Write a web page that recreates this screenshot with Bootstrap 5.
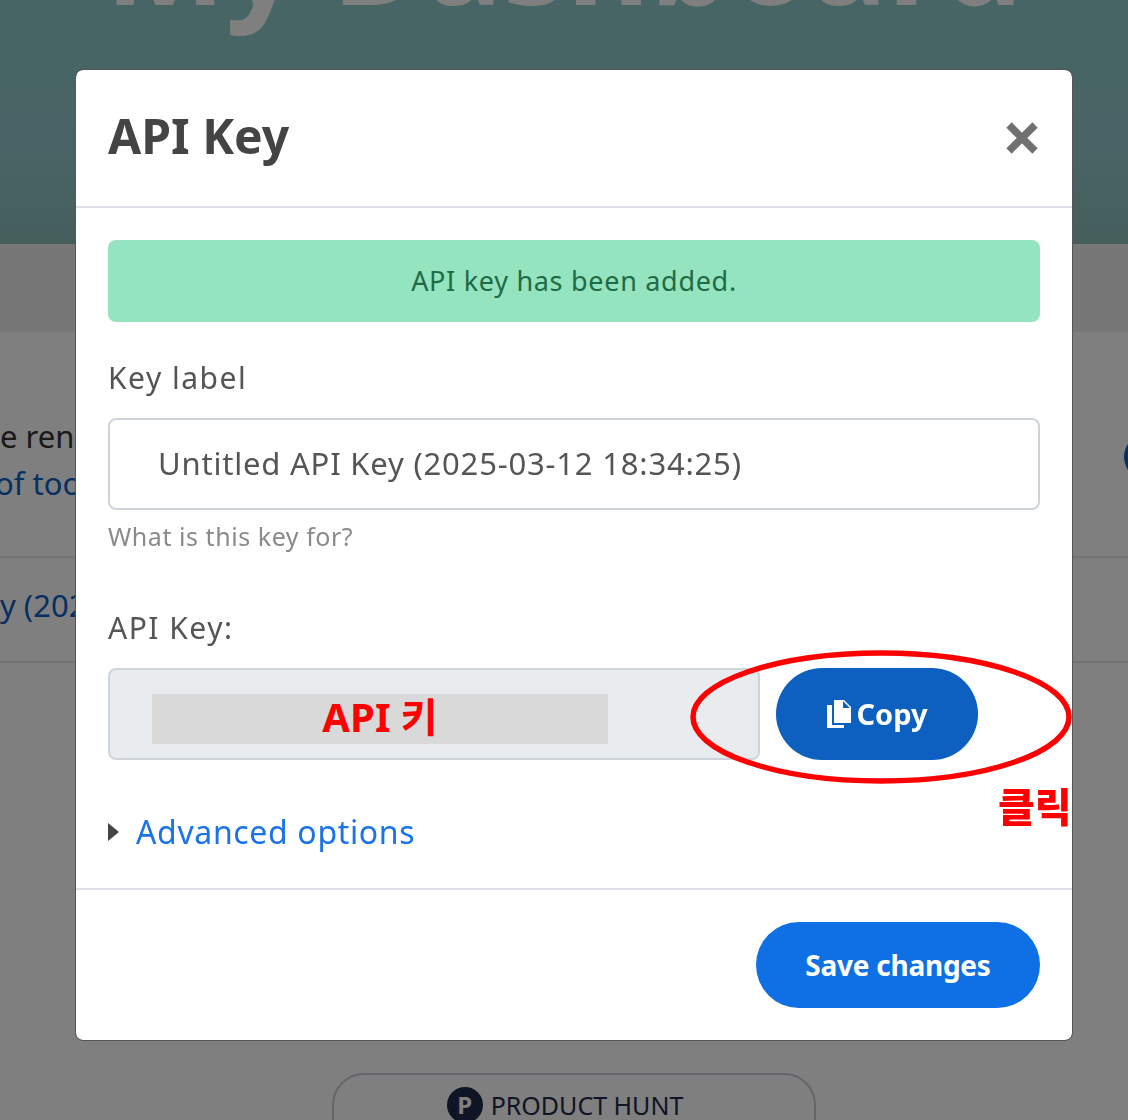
<!DOCTYPE html>
<html lang="ko">
<head>
  <meta charset="UTF-8">
  <meta name="viewport" content="width=device-width, initial-scale=1.0">
  <title>API Key</title>
  <link href="https://cdn.jsdelivr.net/npm/bootstrap@5.3.0/dist/css/bootstrap.min.css" rel="stylesheet">
  <style>
    html, body { height: 1120px; overflow: hidden; }
    body { font-family: "Noto Sans", "Noto Sans CJK KR", sans-serif; color: #333; background: #fff; }

    /* page behind the modal */
    .hero-band { height: 244px; overflow: hidden; background: linear-gradient(#8fcbcb, #93c9cc 60%, #8bbdb9); }
    .hero-title { margin: -129px 0 0; font-size: 128px; line-height: 170px; font-weight: 700; color: #fff; text-align: center; white-space: nowrap; }
    .sub-band { height: 88px; background: #eeeeef; }
    .key-panel { height: 516px; background: #fff; overflow: hidden; }
    .key-intro { height: 224px; padding-top: 81px; font-size: 31px; line-height: 47px; white-space: nowrap; position: relative; }
    .key-intro a, .key-row a { color: #0d5fc4; text-decoration: none; }
    .intro-link { margin-left: -5px; }
    .key-dot { position: absolute; left: 1124px; top: 102px; width: 46px; height: 46px; border-radius: 50%; background: #0d60c0; }
    .key-row { height: 107px; padding-top: 24px; font-size: 31px; line-height: 46px; border-top: 2px solid #e4e4e4; border-bottom: 2px solid #e4e4e4; white-space: nowrap; }
    .hunt-btn { width: 484px; height: 80px; margin: 225px 0 0 332px; border: 2px solid #c8ccd6; border-radius: 32px; font-size: 25px; color: #1e2a4a; padding: 12px 18px 0 0; }
    .hunt-icon { width: 36px; height: 36px; border-radius: 50%; background: #1e2a4a; color: #fff; font-size: 24px; font-weight: 700; line-height: 36px; text-align: center; }

    /* modal */
    .key-dialog { max-width: 998px; margin: 69px 0 0 75px; }
    .key-dialog .modal-content { border-radius: 8px; border: 1px solid #555; color: #444; height: 972px; }
    .key-dialog .modal-header { height: 138px; padding: 0 32px; border-bottom: 2px solid #dee2e6; }
    .key-title { font-size: 48px; font-weight: 700; color: #444; line-height: 1; margin: -4px 0 0; }
    .key-close { border: 0; background: none; padding: 0; width: 34px; height: 34px; margin-right: 1px; }
    .key-dialog .modal-body { padding: 32px 32px 0; }
    .key-alert { height: 82px; border-radius: 8px; background: #95e4c0; color: #1f6b45; font-size: 27px; letter-spacing: .7px; margin: 0 0 35px; border: 0; padding: 0; }
    .key-label { font-size: 30px; line-height: 42px; letter-spacing: 1.5px; color: #555; margin: 0 0 19px; display: block; }
    .key-input { height: 92px; border: 2px solid #ced4da; border-radius: 8px; padding: 0 48px 2px; font-size: 31px; letter-spacing: .8px; color: #555; }
    .key-help { font-size: 25px; line-height: 36px; letter-spacing: .55px; color: #8a8a8a; margin: 8px 0 53px; }
    .key-row-api { position: relative; height: 92px; }
    .key-field { width: 652px; height: 92px; background: #e9ecef; border: 2px solid #ced4da; border-radius: 8px; padding: 10px 0 0 42px; }
    .key-mask { width: 456px; height: 50px; background: #d9d9d9; color: #f00; font-size: 40px; font-weight: 700; line-height: 46px; text-align: center; }
    .copy-btn { width: 202px; height: 92px; margin-left: 16px; border-radius: 46px; background: #0d60c0; border: 0; color: #fff; font-size: 29px; font-weight: 700; padding: 0; }
    .click-ring { position: absolute; left: 581px; top: -18px; }
    .click-note { position: absolute; left: 890px; top: 111px; color: #f00; font-size: 40px; font-weight: 900; line-height: 56px; white-space: nowrap; }
    .advanced { margin-top: 51px; font-size: 32px; line-height: 42px; letter-spacing: .65px; color: #1a73e8; }
    .adv-arrow { width: 0; height: 0; border-left: 11px solid #444; border-top: 9px solid transparent; border-bottom: 9px solid transparent; margin-right: 17px; }
    .key-dialog .modal-footer { position: absolute; left: 0; right: 0; top: 818px; height: 152px; padding: 32px 32px 0; align-items: flex-start; border-top: 2px solid #dee2e6; }
    .save-btn { width: 284px; height: 86px; border-radius: 43px; background: #0f6fe4; border: 0; color: #fff; font-size: 28px; font-weight: 700; letter-spacing: -.25px; padding: 0; margin: 0; }
  </style>
</head>
<body>

  <!-- page behind the modal -->
  <div class="hero-band">
    <h1 class="hero-title">My Dashboard</h1>
  </div>
  <div class="sub-band"></div>
  <section class="key-panel">
    <div class="key-intro">
      <div>e rendering requests</div>
      <div class="intro-link"><a href="#">of tools</a></div>
      <span class="key-dot"></span>
    </div>
    <div class="key-row"><a href="#">y (2025-03-12)</a></div>
  </section>
  <div class="hunt-btn d-flex justify-content-center align-items-start gap-2">
    <span class="hunt-icon">P</span>
    <span>PRODUCT HUNT</span>
  </div>

  <div class="modal-backdrop show"></div>

  <!-- API key modal -->
  <div class="modal d-block">
    <div class="modal-dialog key-dialog">
      <div class="modal-content">
        <div class="modal-header d-flex justify-content-between align-items-center">
          <h5 class="key-title">API Key</h5>
          <button type="button" class="key-close" aria-label="Close">
            <svg width="34" height="34" viewBox="0 0 34 34"><path d="M4 4 30 30M30 4 4 30" stroke="#707070" stroke-width="7.5" fill="none"/></svg>
          </button>
        </div>
        <div class="modal-body">
          <div class="alert key-alert d-flex align-items-center justify-content-center">API key has been added.</div>
          <label class="key-label" for="keyLabel">Key label</label>
          <input id="keyLabel" type="text" class="form-control key-input" value="Untitled API Key (2025-03-12 18:34:25)">
          <div class="key-help">What is this key for?</div>
          <div class="key-label">API Key:</div>
          <div class="key-row-api d-flex">
            <div class="key-field d-flex align-items-center">
              <div class="key-mask">API 키</div>
            </div>
            <button type="button" class="btn copy-btn d-flex align-items-center justify-content-center gap-1">
              <svg width="26" height="30" viewBox="0 0 26 30"><path fill="#fff" d="M8 1h10l7 7v16H8zM17 2v7h7zM1 6h5v20h12v3H1z"/></svg>
              Copy
            </button>
            <svg class="click-ring" width="384" height="134" viewBox="0 0 384 134"><ellipse cx="192" cy="67" rx="188" ry="64" fill="none" stroke="#f00" stroke-width="5.5"/></svg>
            <div class="click-note">클릭</div>
          </div>
          <div class="advanced d-flex align-items-center">
            <span class="adv-arrow"></span>
            <span>Advanced options</span>
          </div>
        </div>
        <div class="modal-footer">
          <button type="button" class="btn save-btn">Save changes</button>
        </div>
      </div>
    </div>
  </div>

  <script src="https://cdn.jsdelivr.net/npm/bootstrap@5.3.0/dist/js/bootstrap.bundle.min.js"></script>
</body>
</html>
